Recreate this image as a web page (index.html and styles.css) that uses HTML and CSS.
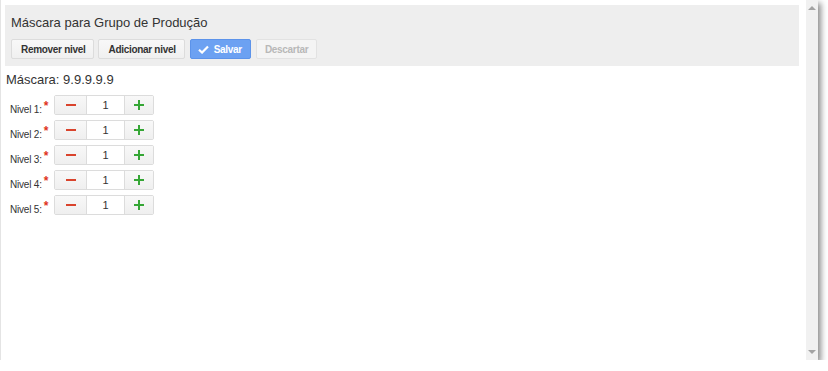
FILE: index.html
```html
<!DOCTYPE html>
<html lang="pt-BR">
<head>
  <meta charset="UTF-8"/>
  <title>Máscara para Grupo de Produção</title>
  <link rel="stylesheet" href="styles.css">
</head>
<body>
  <div class="window">
    <div class="content">

      <!-- Cabeçalho com ações -->
      <div class="panel">
        <h1 class="title">Máscara para Grupo de Produção</h1>
        <div class="actions">
          <button class="btn">Remover nivel</button>
          <button class="btn">Adicionar nivel</button>
          <button class="btn btn-primary">
            <svg class="check" viewBox="0 0 12 10" width="11" height="9"><path d="M1 5.2 L4.4 8.4 L11 1.6" fill="none" stroke="#fff" stroke-width="2.4"/></svg>
            Salvar
          </button>
          <button class="btn btn-disabled" disabled>Descartar</button>
        </div>
      </div>

      <div class="mask">Máscara: 9.9.9.9.9</div>

      <!-- Níveis -->
      <div class="levels">
        <div class="level">
          <label class="level-label">Nivel 1:<span class="req">*</span></label>
          <div class="spinner">
            <span class="spin minus"><i></i></span>
            <input class="spin-value" value="1">
            <span class="spin plus"><i></i></span>
          </div>
        </div>
        <div class="level">
          <label class="level-label">Nivel 2:<span class="req">*</span></label>
          <div class="spinner">
            <span class="spin minus"><i></i></span>
            <input class="spin-value" value="1">
            <span class="spin plus"><i></i></span>
          </div>
        </div>
        <div class="level">
          <label class="level-label">Nivel 3:<span class="req">*</span></label>
          <div class="spinner">
            <span class="spin minus"><i></i></span>
            <input class="spin-value" value="1">
            <span class="spin plus"><i></i></span>
          </div>
        </div>
        <div class="level">
          <label class="level-label">Nivel 4:<span class="req">*</span></label>
          <div class="spinner">
            <span class="spin minus"><i></i></span>
            <input class="spin-value" value="1">
            <span class="spin plus"><i></i></span>
          </div>
        </div>
        <div class="level">
          <label class="level-label">Nivel 5:<span class="req">*</span></label>
          <div class="spinner">
            <span class="spin minus"><i></i></span>
            <input class="spin-value" value="1">
            <span class="spin plus"><i></i></span>
          </div>
        </div>
      </div>
    </div>

    <!-- Barra de rolagem -->
    <div class="scrollbar">
      <span class="arrow up"></span>
      <span class="arrow down"></span>
    </div>
  </div>
</body>
</html>
```

FILE: styles.css
```css
/* === Base === */
* { margin:0; padding:0; box-sizing:border-box; }
body { background:#fff; font-family:"Liberation Sans", Arial, sans-serif; color:#333; }

/* === Janela === */
.window {
  display:flex;
  width:818px; height:360px;
  background:#fff;
  border-left:1px solid #e4e4e4;
  box-shadow: 3px 3px 6px rgba(0,0,0,0.45);
}
.content { flex:1; padding:5px 7px 0 4px; }

.scrollbar {
  width:12px;
  background:#f1f1f1;
  display:flex; flex-direction:column; justify-content:space-between; align-items:center;
  padding:6px 0 6px;
}
.arrow { width:0; height:0; border-left:4px solid transparent; border-right:4px solid transparent; }
.arrow.up { border-bottom:4px solid #a3a3a3; }
.arrow.down { border-top:4px solid #a3a3a3; }

/* === Cabeçalho === */
.panel {
  background:#eeeeee;
  padding:10px 6px 6px;
  height:61px;
}
.title { font-size:13px; font-weight:normal; line-height:16px; color:#333; margin-bottom:8px; }
.actions { display:flex; gap:4px; }
.btn {
  height:20px;
  padding:0 8px 0 9px;
  font-family:"Liberation Sans", Arial, sans-serif;
  font-size:10px; font-weight:bold; color:#333;
  letter-spacing:-0.3px;
  background:linear-gradient(#f8f8f8, #f0f0f0);
  border:1px solid #dcdcdc;
  border-radius:2px;
  display:flex; align-items:center; gap:5px;
}
.btn-primary {
  background:#6ca1f2;
  border-color:#5c93ea;
  color:#fff;
  padding:0 8px 0 7px;
  margin-left:1px;
}
.check { display:block; }
.btn-disabled {
  background:#f4f4f4;
  border-color:#e2e2e2;
  color:#b8b8b8;
  padding:0 8px;
  margin-left:1px;
}

/* === Máscara === */
.mask { font-size:13px; line-height:16px; margin:6px 0 7px 1px; }

/* === Níveis === */
.levels { display:flex; flex-direction:column; gap:5px; }
.level { display:flex; align-items:center; height:20px; }
.level-label { width:49px; padding-left:5px; font-size:10px; letter-spacing:-0.2px; color:#333; padding-top:3px; }
.req { color:#e0341b; font-size:12px; font-weight:bold; vertical-align:3px; margin-left:2px; }

.spinner { display:flex; height:20px; border:1px solid #dcdcdc; border-radius:2px; }
.spin {
  display:flex; align-items:center; justify-content:center;
  background:linear-gradient(#f8f8f8, #efefef);
  position:relative;
}
.spin.minus { width:31px; }
.spin.plus { width:29px; border-left:1px solid #dcdcdc; }
.spin.minus i { width:10px; height:2px; background:#d9432c; }
.spin.plus i { width:10px; height:2px; background:#35a635; position:relative; }
.spin.plus i::after {
  content:''; position:absolute; left:4px; top:-4px;
  width:2px; height:10px; background:#35a635;
}
.spin-value {
  width:38px; border:none; border-left:1px solid #dcdcdc;
  background:#fff; text-align:center;
  font-family:"Liberation Sans", Arial, sans-serif; font-size:11px; color:#333;
  outline:none;
}
```
